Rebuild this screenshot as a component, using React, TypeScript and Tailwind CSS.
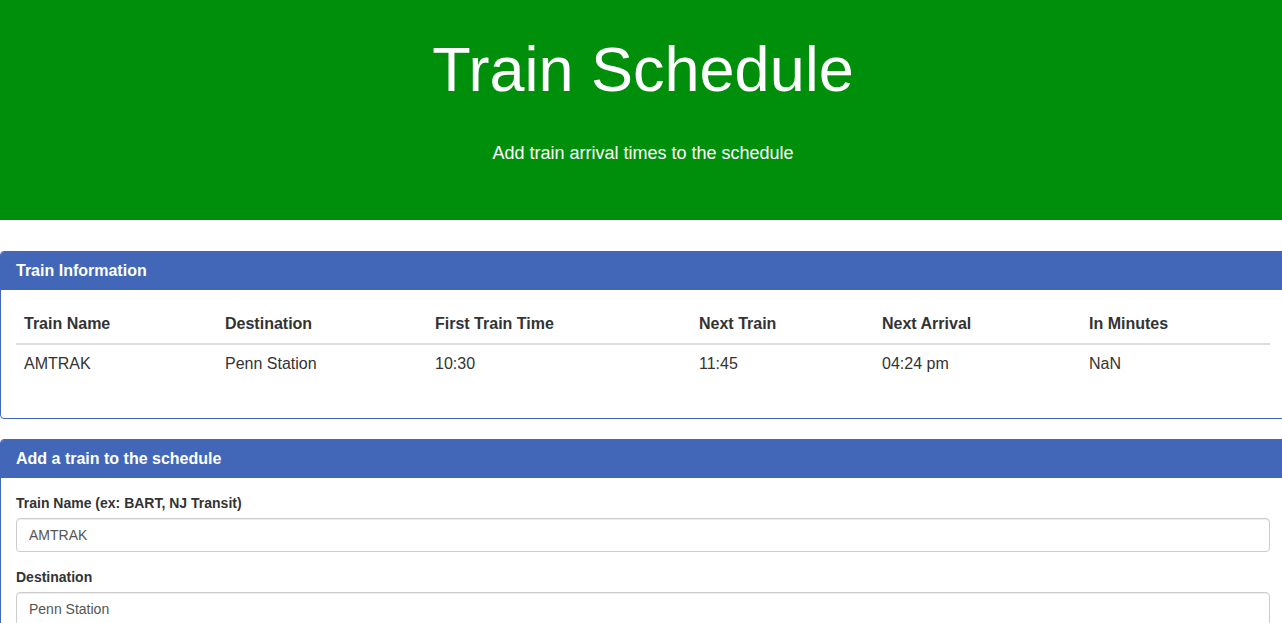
import React from "react";

const COLUMNS = [
  { label: "Train Name", width: "w-[201px]" },
  { label: "Destination", width: "w-[210px]" },
  { label: "First Train Time", width: "w-[264px]" },
  { label: "Next Train", width: "w-[183px]" },
  { label: "Next Arrival", width: "w-[207px]" },
  { label: "In Minutes", width: "" },
];

const ROWS = [["AMTRAK", "Penn Station", "10:30", "11:45", "04:24 pm", "NaN"]];

const FIELDS = [
  { label: "Train Name (ex: BART, NJ Transit)", value: "AMTRAK" },
  { label: "Destination", value: "Penn Station" },
  { label: "First Train Time (HH:mm - military time)", value: "10:30" },
  { label: "Frequency (min)", value: "75" },
];

function Panel({ title, children }: { title: string; children: React.ReactNode }) {
  return (
    <div className="mb-[20px] rounded-[4px] border border-[#4267b8] bg-white">
      <div className="flex h-[38px] items-center rounded-t-[3px] bg-[#4267b8] px-[15px] text-[16px] font-bold text-white">
        {title}
      </div>
      <div className="p-[15px]">{children}</div>
    </div>
  );
}

export default function App() {
  return (
    <div className="min-h-screen overflow-x-hidden bg-white font-['Liberation_Sans',Arial,sans-serif] text-[#333]">
      {/* page is a few px wider than the window, so the right edges sit offscreen */}
      <div className="w-[calc(100%+4px)]">
        <header className="flex h-[220px] flex-col items-center bg-[#008f0a] pt-[35px] text-white">
          <h1 className="text-[63px] leading-[69px]">Train Schedule</h1>
          <p className="mt-[36px] text-[18px] leading-[26px]">Add train arrival times to the schedule</p>
        </header>

        <div className="mt-[31px]">
          <Panel title="Train Information">
            <table className="mb-[20px] w-full border-collapse text-left text-[16px]">
              <thead>
                <tr>
                  {COLUMNS.map((c) => (
                    <th
                      key={c.label}
                      className={`${c.width} border-b-2 border-[#ddd] px-[8px] pt-[8px] pb-[8px] font-bold leading-[22px]`}
                    >
                      {c.label}
                    </th>
                  ))}
                </tr>
              </thead>
              <tbody>
                {ROWS.map((row, i) => (
                  <tr key={i}>
                    {row.map((cell, j) => (
                      <td key={j} className="px-[8px] pt-[8px] pb-[8px] leading-[22px]">
                        {cell}
                      </td>
                    ))}
                  </tr>
                ))}
              </tbody>
            </table>
          </Panel>

          <Panel title="Add a train to the schedule">
            {FIELDS.map((f) => (
              <div key={f.label} className="mb-[15px]">
                <label className="mb-[5px] block text-[14px] font-bold leading-[20px]">{f.label}</label>
                <input
                  readOnly
                  value={f.value}
                  className="block h-[34px] w-full rounded-[4px] border border-[#ccc] px-[12px] text-[14px] text-[#555] shadow-[inset_0_1px_1px_rgba(0,0,0,0.075)] outline-none"
                />
              </div>
            ))}
          </Panel>
        </div>
      </div>
    </div>
  );
}
